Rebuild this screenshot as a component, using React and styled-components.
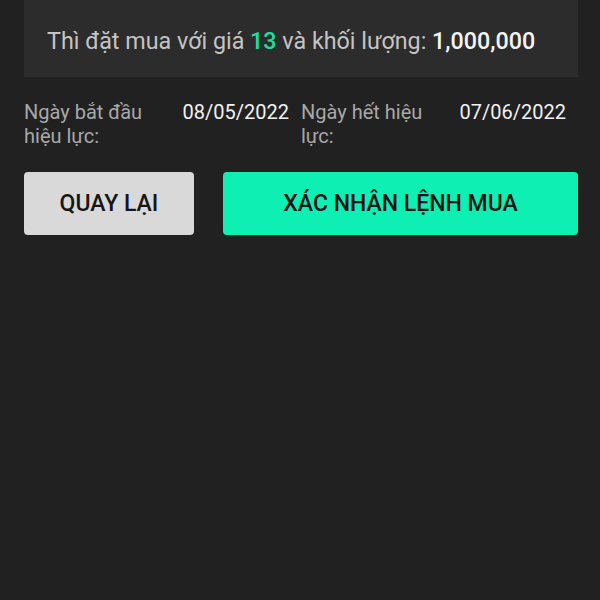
import React from "react";
import styled, { createGlobalStyle } from "styled-components";

const GlobalStyle = createGlobalStyle`
  html, body {
    margin: 0;
    padding: 0;
    background-color: #212121;
  }
  body {
    font-family: Roboto, "Noto Sans", sans-serif;
  }
`;

const Page = styled.div`
  width: 600px;
  height: 600px;
  box-sizing: border-box;
  padding: 0 22px 0 24px;
  background-color: #212121;
`;

const SummaryCard = styled.div`
  height: 77px;
  box-sizing: border-box;
  padding: 26px 23px 0;
  background-color: #2c2c2c;
  font-size: 23.3px;
  line-height: 30px;
  color: #c4c4c4;
`;

const Highlight = styled.span`
  color: ${({ $green }) => ($green ? "#20dca3" : "#f4f4f4")};
  font-weight: 500;
`;

const DatesRow = styled.div`
  display: grid;
  grid-template-columns: 1fr 1fr;
  margin-top: 23px;
`;

const DateItem = styled.div`
  display: flex;
  justify-content: space-between;
  align-items: flex-start;
  padding-right: 12px;
`;

const DateLabel = styled.div`
  width: 145px;
  font-size: 20px;
  line-height: 24px;
  color: #a8a8a8;
`;

const DateValue = styled.div`
  font-size: 20px;
  line-height: 24px;
  color: #f2f2f2;
`;

const Actions = styled.div`
  display: grid;
  grid-template-columns: 170px 1fr;
  gap: 29px;
  margin-top: 24px;
`;

const Button = styled.button`
  height: 63px;
  padding: 0;
  border: none;
  border-radius: 4px;
  background-color: ${({ $primary }) => ($primary ? "#0eefb4" : "#d9d9d9")};
  color: #161616;
  font-family: Roboto, "Noto Sans", sans-serif;
  font-size: 23px;
  font-weight: 500;
  cursor: pointer;
`;

export default function App() {
  return (
    <Page>
      <GlobalStyle />
      <SummaryCard>
        Thì đặt mua với giá <Highlight $green>13</Highlight> và khối lượng:{" "}
        <Highlight>1,000,000</Highlight>
      </SummaryCard>
      <DatesRow>
        <DateItem>
          <DateLabel>Ngày bắt đầu hiệu lực:</DateLabel>
          <DateValue>08/05/2022</DateValue>
        </DateItem>
        <DateItem>
          <DateLabel>Ngày hết hiệu lực:</DateLabel>
          <DateValue>07/06/2022</DateValue>
        </DateItem>
      </DatesRow>
      <Actions>
        <Button>QUAY LẠI</Button>
        <Button $primary>XÁC NHẬN LỆNH MUA</Button>
      </Actions>
    </Page>
  );
}
